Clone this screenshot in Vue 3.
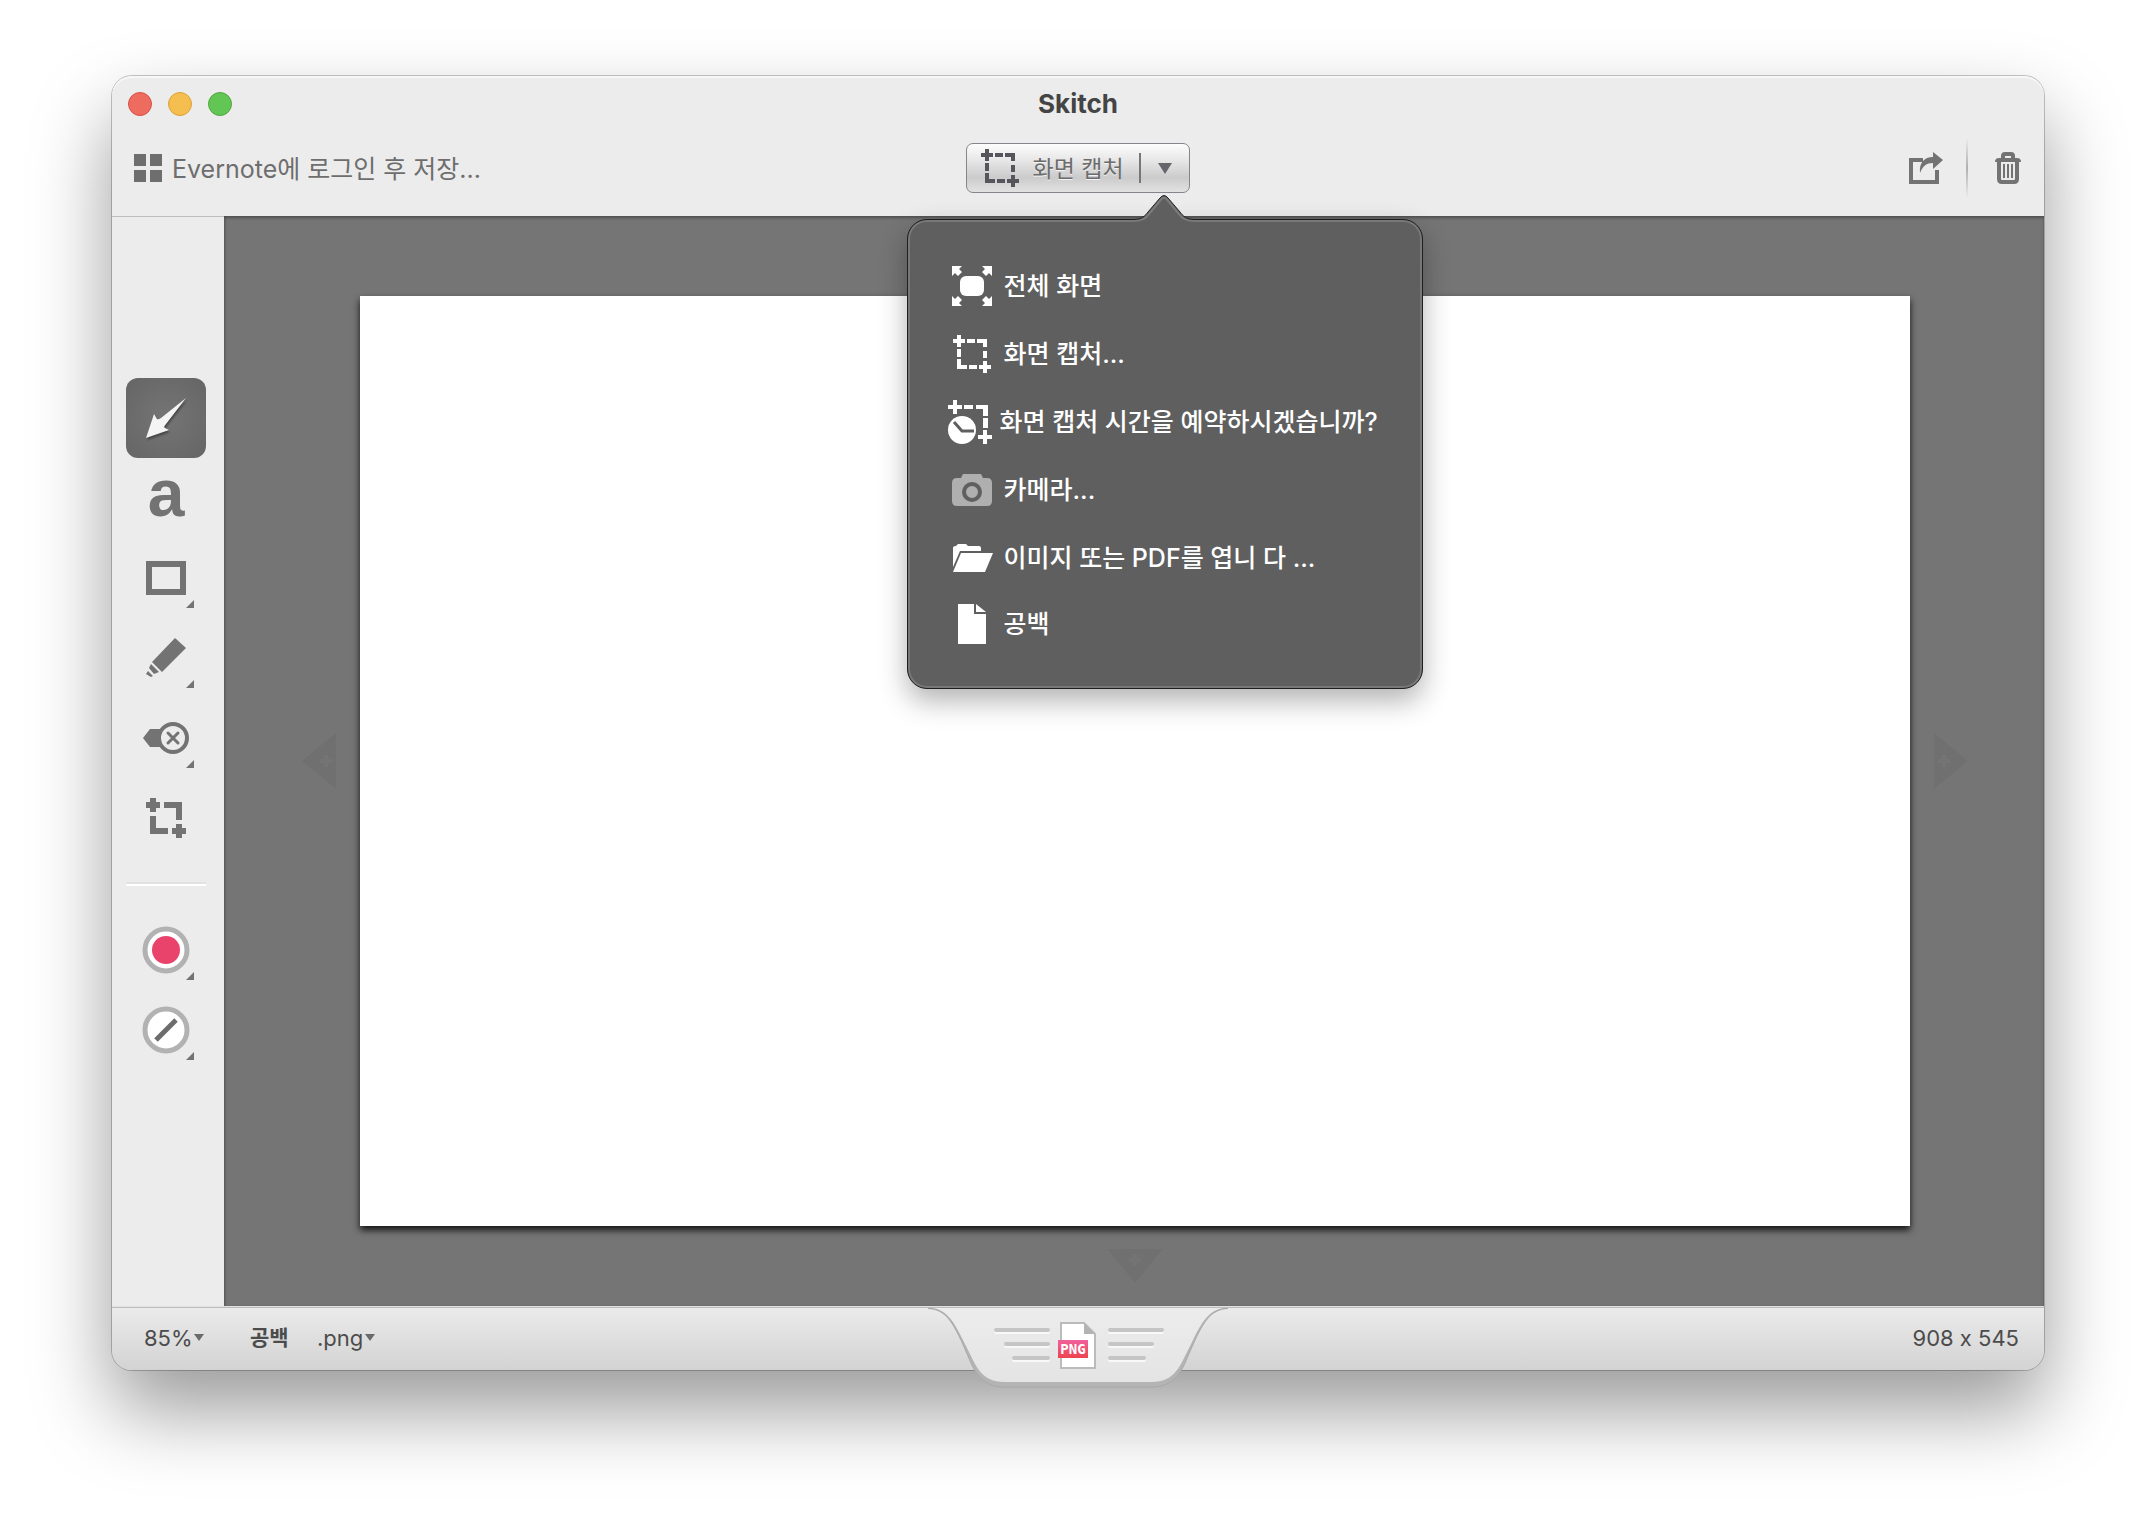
<script setup>
import { ref } from 'vue'

const zoomLevel = ref('85%')
const format = ref('.png')
const activeTool = ref('arrow')

const tools = [
  { id: 'arrow', label: '화살표' },
  { id: 'text', label: '텍스트' },
  { id: 'shape', label: '도형', more: true },
  { id: 'marker', label: '마커', more: true },
  { id: 'stamp', label: '스탬프', more: true },
  { id: 'crop', label: '자르기' },
]

const captureItems = [
  { id: 'full', label: '전체 화면' },
  { id: 'area', label: '화면 캡처...' },
  { id: 'timed', label: '화면 캡처 시간을 예약하시겠습니까?' },
  { id: 'camera', label: '카메라...' },
  { id: 'open', label: '이미지 또는 PDF를 엽니 다 ...' },
  { id: 'blank', label: '공백' },
]

const dashedCrop =
  'M4 0h4v4h4v4H8v4H4V8H0V4h4zM14 4h8v4h-8zM24 4h10v8h-4V8h-6zM30 16h4v7h-4zM30 26h4v4h4v4h-4v4h-4v-4h-4v-4h4zM16 30h8v4h-8zM4 14h4v8H4zM4 24h4v6h6v4H4z'
</script>

<template>
  <div class="desktop">
    <main class="window">
      <header class="header">
        <div class="titlebar">
          <div class="lights">
            <button class="light close" aria-label="닫기"></button>
            <button class="light minimize" aria-label="최소화"></button>
            <button class="light expand" aria-label="확대"></button>
          </div>
          <h1 class="title">Skitch</h1>
        </div>

        <div class="toolbar">
          <button class="login">
            <svg width="28" height="28" fill="currentColor" aria-hidden="true">
              <path d="M0 0h12v12H0zM16 0h12v12H16zM0 16h12v12H0zM16 16h12v12H16z" />
            </svg>
            <span class="caption">Evernote에 로그인 후 저장...</span>
          </button>

          <div class="capture">
            <div class="split">
              <button class="split-main">
                <svg width="38" height="38" fill="#55555b" aria-hidden="true"><path :d="dashedCrop" /></svg>
                <span class="caption">화면 캡처</span>
              </button>
              <button class="split-more" aria-label="캡처 메뉴" aria-expanded="true">
                <svg width="14" height="11" aria-hidden="true"><path d="M0 0h14L7 11z" fill="#65656b" /></svg>
              </button>
            </div>

            <div class="popover">
              <svg class="pointer" width="60" height="30" aria-hidden="true">
                <path d="M0 25.500C8 25 11 22 14 18L26 4Q30-1 34 4L46 18C49 22 52 25 60 25.500V30H0z" fill="#5f5f5f" />
                <path d="M0 27C9 27 12 24 15 20L27 5.500Q30 2 33 5.500L45 20C48 24 51 27 60 27" fill="none" stroke="#7b7b7b" stroke-width="2" />
                <path d="M0 25.500C8 25 11 22 14 18L26 4Q30-1 34 4L46 18C49 22 52 25 60 25.500" fill="none" stroke="#222" />
              </svg>
              <ul class="menu">
                <li v-for="item in captureItems" :key="item.id">
                  <button class="menu-item">
                    <span class="menu-icon" :class="item.id">
                      <svg v-if="item.id === 'full'" width="40" height="40" fill="#fff">
                        <rect x="8" y="10" width="24" height="20" rx="6" />
                        <path d="M0 0h10L7 3l3 3-4 4-3-3-3 3zM40 0H30l3 3-3 3 4 4 3-3 3 3zM0 40h10l-3-3 3-3-4-4-3 3-3-3zM40 40H30l3-3-3-3 4-4 3 3 3-3z" />
                      </svg>
                      <svg v-else-if="item.id === 'area'" width="38" height="38" fill="#fff"><path :d="dashedCrop" /></svg>
                      <svg v-else-if="item.id === 'timed'" width="44" height="44" fill="#fff">
                        <path d="M5 0h4v5h5v4H9v5H5V9H0V5h5zM16 5h9v4h-9zM28 5h12v11h-5V9h-7zM35 18h5v10h-5zM35 30h4v5h5v4h-5v5h-4v-5h-5v-4h5z" />
                        <circle cx="14" cy="30" r="14" />
                        <path d="M6 22l8 9h12" fill="none" stroke="#5f5f5f" stroke-width="3" />
                      </svg>
                      <svg v-else-if="item.id === 'camera'" width="40" height="32" fill="#afafaf">
                        <path d="M11 0h18l2 4h4q5 0 5 5v18q0 5-5 5H5q-5 0-5-5V9q0-5 5-5h4z" />
                        <circle cx="20" cy="18" r="8" fill="none" stroke="#5f5f5f" stroke-width="4" />
                      </svg>
                      <svg v-else-if="item.id === 'open'" width="42" height="28" fill="#fff">
                        <path d="M2 23V4q0-2 3-2l2-2h8l2 2h11q2 0 2 2v3H9z" />
                        <path d="M10 9h32l-8 19H2z" />
                      </svg>
                      <svg v-else width="28" height="40" fill="#fff">
                        <path d="M0 0h16v10h12v30H0zM18 0l10 8H18z" />
                      </svg>
                    </span>
                    <span>{{ item.label }}</span>
                  </button>
                </li>
              </ul>
            </div>
          </div>

          <div class="actions">
            <button class="action" aria-label="공유">
              <svg width="36" height="32">
                <path d="M14 8H2v22h26V18" fill="none" stroke="#737373" stroke-width="4" />
                <path d="M24 0l10 8-10 9v-6c-7 0-10 3-13 10C10 11 15 5 24 5z" fill="#737373" />
              </svg>
            </button>
            <span class="divider"></span>
            <button class="action" aria-label="삭제">
              <svg width="26" height="32">
                <path d="M0 10q0-4 4-4h2V4q0-4 4-4h6q4 0 4 4v2h2q4 0 4 4zM10 6h6V4h-6z" fill="#737373" fill-rule="evenodd" />
                <path d="M4 9v18q0 3 3 3h12q3 0 3-3V9" fill="none" stroke="#737373" stroke-width="4" />
                <path d="M9 12v14M13 12v14M17 12v14" stroke="#737373" stroke-width="2" />
              </svg>
            </button>
          </div>
        </div>
      </header>

      <div class="body">
        <nav class="sidebar" aria-label="도구">
          <button
            v-for="tool in tools"
            :key="tool.id"
            class="tool"
            :class="{ active: tool.id === activeTool }"
            :aria-label="tool.label"
            @click="activeTool = tool.id"
          >
            <span v-if="tool.id === 'text'" class="letter">a</span>
            <svg v-else width="80" height="80" fill="#737373">
              <path v-if="tool.id === 'arrow'" class="arrow-glyph" d="M60 20L40 46Q37 49 39 50L43 52 20 60 28 36 31 41Q32 42 35 40z" />
              <path v-else-if="tool.id === 'shape'" d="M20 23h40v34H20zM26 29v22h28V29z" fill-rule="evenodd" />
              <path v-else-if="tool.id === 'marker'" d="M49 20l11 10-24 24-10-10zM25 46l8 8-5 2-5-6zM22 53l5 5-2 1-5-3z" />
              <g v-else-if="tool.id === 'stamp'">
                <path d="M17 40l7-9h13v18H24z" />
                <circle cx="47" cy="40" r="14" fill="#ececec" stroke="#737373" stroke-width="4" />
                <path d="M42 35l10 10M52 35l-10 10" stroke="#737373" stroke-width="3" stroke-linecap="round" />
              </g>
              <path v-else d="M24 20h6v4h4v6h-4v4h-6v-4h-4v-6h4zM38 24h18v18h-6V30H38zM24 38h6v12h12v6H24zM50 46h6v4h4v6h-4v4h-6v-4h-4v-6h4z" />
              <path v-if="tool.more" d="M68 62v8h-8z" />
            </svg>
          </button>
          <hr class="separator" />
          <button class="tool" aria-label="색상">
            <svg width="80" height="80">
              <circle cx="40" cy="40" r="21" fill="#fff" stroke="#b2b2b2" stroke-width="5" />
              <circle cx="40" cy="40" r="14" fill="#ea436b" />
              <path d="M68 62v8h-8z" fill="#737373" />
            </svg>
          </button>
          <button class="tool" aria-label="굵기">
            <svg width="80" height="80">
              <circle cx="40" cy="40" r="21" fill="#fff" stroke="#b2b2b2" stroke-width="5" />
              <path d="M30 50l20-20" stroke="#6c6c6c" stroke-width="5" />
              <path d="M68 62v8h-8z" fill="#737373" />
            </svg>
          </button>
        </nav>

        <section class="stage">
          <svg class="grow left" width="34" height="56"><path d="M34 0v56L0 28z" /><path class="plus" d="M18 28h12M24 22v12" /></svg>
          <div class="canvas"></div>
          <svg class="grow right" width="34" height="56"><path d="M0 0v56l34-28z" /><path class="plus" d="M4 28h12M10 22v12" /></svg>
          <svg class="grow bottom" width="56" height="34"><path d="M0 0h56L28 34z" /><path class="plus" d="M22 11h12M28 5v12" /></svg>
        </section>
      </div>

      <footer class="footer">
        <label class="picker zoom">
          <select v-model="zoomLevel" aria-label="확대/축소">
            <option>85%</option>
          </select>
          <svg width="10" height="7"><path d="M0 0h10L5 7z" fill="#6a6a6a" /></svg>
        </label>
        <strong class="name">공백</strong>
        <label class="picker">
          <select v-model="format" aria-label="파일 형식">
            <option>.png</option>
          </select>
          <svg width="10" height="7"><path d="M0 0h10L5 7z" fill="#6a6a6a" /></svg>
        </label>
        <span class="size">908 x 545</span>

        <button class="drag-tab" aria-label="드래그하여 내보내기">
          <svg width="316" height="84">
            <defs>
              <linearGradient id="face" x1="0" y1="0" x2="0" y2="1">
                <stop offset="0" stop-color="#ececec" />
                <stop offset="1" stop-color="#e4e4e4" />
              </linearGradient>
              <linearGradient id="badge" x1="0" y1="0" x2="0" y2="1">
                <stop offset="0" stop-color="#f0609c" />
                <stop offset="1" stop-color="#ee434e" />
              </linearGradient>
            </defs>
            <path d="M8 2.500C26 3 33 18 41 34L48 50C53 62 60 81 84 81H232C256 81 263 62 268 50L275 34C283 18 290 3 308 2.500z" fill="#b4b4b4" stroke="#a9a9a9" />
            <path d="M12 2C28 4 35 18 43 34L50 48C56 60 62 76 84 76H232C254 76 260 60 266 48L273 34C281 18 288 4 304 2z" fill="url(#face)" />
            <g stroke-width="4" stroke-linecap="round">
              <path d="M76 26h52M86 40h42M94 54h34M190 26h52M190 40h42M190 54h34" stroke="#f8f8f8" />
              <path d="M76 24h52M86 38h42M94 52h34M190 24h52M190 38h42M190 52h34" stroke="#c5c5c5" />
            </g>
            <path d="M141 17h23l11 11v34h-34z" fill="#fff" stroke="#bbb" stroke-width="2" />
            <path d="M164 17v11h11z" fill="#b3b3b3" />
            <rect x="138" y="34" width="30" height="18" fill="url(#badge)" />
            <text x="153" y="48" class="badge-text">PNG</text>
          </svg>
        </button>
      </footer>
    </main>
  </div>
</template>

<style>
body {
  background: #fff;
}
</style>

<style scoped>
.desktop,
.desktop * {
  box-sizing: border-box;
}

.desktop {
  display: flex;
  min-height: 100vh;
  padding: 76px 112px 148px;
  font-family: Inter, "Noto Sans CJK KR", sans-serif;
  font-size: 25px;
  font-feature-settings: "calt" 0;
  color: #6e6e6e;
}

button {
  margin: 0;
  padding: 0;
  border: 0;
  background: none;
  color: inherit;
  font: inherit;
  cursor: pointer;
}

svg {
  display: block;
  flex: none;
}

.window {
  display: flex;
  flex: 1;
  flex-direction: column;
  min-width: 0;
  border-radius: 20px;
  background: #ececec;
  box-shadow: 0 0 0 1px rgba(0, 0, 0, 0.22), 0 40px 80px rgba(0, 0, 0, 0.4);
}

.header {
  padding-bottom: 12px;
  border-radius: 20px 20px 0 0;
  box-shadow: inset 0 2px 0 #f7f7f7;
}

.titlebar {
  display: grid;
  grid-template-columns: 1fr auto 1fr;
  align-items: center;
  height: 56px;
  padding: 0 16px;
}

.lights {
  display: flex;
  gap: 16px;
}

.light {
  width: 24px;
  height: 24px;
  border: 1px solid;
  border-radius: 50%;
}

.close {
  background: #ed6b5f;
  border-color: #d85248;
}

.minimize {
  background: #f5bf4f;
  border-color: #dba13a;
}

.expand {
  background: #62c655;
  border-color: #51a73e;
}

.title {
  margin: 0;
  color: #444;
  font-size: 26px;
  font-weight: 700;
  line-height: 30px;
}

.toolbar {
  display: grid;
  grid-template-columns: 1fr auto 1fr;
  align-items: center;
  height: 72px;
  padding: 0 23px 0 22px;
}

.login {
  display: flex;
  align-items: center;
  justify-self: start;
  gap: 10px;
  line-height: 30px;
}

.caption {
  padding-top: 2px;
}

.capture {
  position: relative;
}

.split {
  display: flex;
  align-items: center;
  width: 224px;
  height: 50px;
  border: 1px solid #85858c;
  border-radius: 7px;
  background: linear-gradient(#fdfdfd, #e6e6e6 35%, #cbcbcb 70%, #e2e2e2);
}

.split-main {
  display: flex;
  flex: 1;
  align-items: center;
  gap: 14px;
  height: 30px;
  padding-left: 14px;
  border-right: 2px solid #77777b;
  color: #6c6c6c;
  font-size: 23px;
  line-height: 28px;
  text-shadow: 0 1px 0 #f4f4f4;
}

.split-more {
  display: flex;
  align-items: center;
  justify-content: center;
  width: 48px;
  height: 48px;
}

.popover {
  position: absolute;
  z-index: 2;
  top: 76px;
  left: -59px;
  width: 516px;
  padding: 32px 0;
  border: 1px solid #1f1f1f;
  border-radius: 20px;
  background: #5f5f5f;
  box-shadow: inset 0 0 0 2px #787878, 0 12px 28px rgba(0, 0, 0, 0.3);
}

.pointer {
  position: absolute;
  top: -26px;
  left: 226px;
}

.menu {
  margin: 0;
  padding: 0;
  list-style: none;
}

.menu-item {
  display: flex;
  align-items: center;
  gap: 8px;
  width: 100%;
  height: 68px;
  padding-left: 40px;
  color: #fff;
  font-size: 25px;
  font-weight: 500;
  line-height: 32px;
  white-space: nowrap;
}

li:last-child .menu-item {
  height: 64px;
}

.menu-icon {
  display: flex;
  justify-content: center;
  width: 48px;
}

.menu-icon.timed {
  width: 44px;
}

.actions {
  display: flex;
  align-items: center;
  justify-self: end;
}

.divider {
  width: 2px;
  height: 60px;
  margin: 0 27px 0 21px;
  background: linear-gradient(rgba(170, 170, 170, 0), #b0b0b0, rgba(170, 170, 170, 0));
}

.body {
  display: flex;
  flex: 1;
}

.sidebar {
  display: flex;
  flex-direction: column;
  width: 112px;
  padding: 161px 18px 0 14px;
  border-top: 1px solid #bdbdbd;
}

.tool {
  display: flex;
  align-items: center;
  justify-content: center;
  width: 80px;
  height: 80px;
  border-radius: 12px;
}

.tool.active {
  background: radial-gradient(#757575, #656565);
}

.arrow-glyph {
  fill: #f4f4f4;
  filter: drop-shadow(1px 2px 1px rgba(0, 0, 0, 0.4));
}

.letter {
  padding-bottom: 10px;
  color: #737373;
  font-family: "Liberation Sans", sans-serif;
  font-size: 66px;
  font-weight: 700;
  line-height: 70px;
}

.separator {
  width: 80px;
  height: 4px;
  margin: 24px 0;
  border: 0;
  border-top: 2px solid #e2e2e2;
  background: #fff;
}

.stage {
  display: grid;
  flex: 1;
  grid-template-columns: 136px 1fr 134px;
  grid-template-rows: 80px 1fr 80px;
  align-items: center;
  justify-items: center;
  background: #757575;
  box-shadow: inset 0 2px 3px rgba(0, 0, 0, 0.3), inset 2px 0 2px rgba(0, 0, 0, 0.1);
}

.canvas {
  grid-area: 2 / 2;
  place-self: stretch;
  background: #fff;
  box-shadow: 0 4px 7px rgba(0, 0, 0, 0.85);
}

.grow {
  fill: rgba(0, 0, 0, 0.04);
}

.plus {
  stroke: rgba(255, 255, 255, 0.03);
  stroke-width: 4;
}

.grow.left {
  grid-area: 2 / 1;
  justify-self: end;
  margin-right: 24px;
}

.grow.right {
  grid-area: 2 / 3;
  justify-self: start;
  margin-left: 24px;
}

.grow.bottom {
  grid-area: 3 / 2;
}

.footer {
  position: relative;
  display: flex;
  align-items: center;
  height: 64px;
  padding: 0 25px 2px 32px;
  border-top: 1px solid #e2e2e2;
  border-radius: 0 0 20px 20px;
  background: linear-gradient(#ebebeb, #d3d3d3);
  box-shadow: inset 0 1px 0 #bcbcbc;
  color: #4c4c4c;
  font-size: 22px;
  line-height: 28px;
}

.picker {
  display: flex;
  align-items: center;
  gap: 1px;
}

.picker select {
  appearance: none;
  margin: 0;
  padding: 0;
  border: 0;
  background: none;
  color: inherit;
  font: inherit;
}

.zoom {
  width: 106px;
}

.name {
  width: 67px;
  font-size: 21px;
  font-weight: 700;
}

.size {
  margin-left: auto;
}

.drag-tab {
  position: absolute;
  top: -1px;
  left: 50%;
  margin-left: -158px;
}

.badge-text {
  fill: #fff;
  font-family: "DejaVu Sans Mono", monospace;
  font-size: 14px;
  font-weight: 700;
  text-anchor: middle;
}
</style>
